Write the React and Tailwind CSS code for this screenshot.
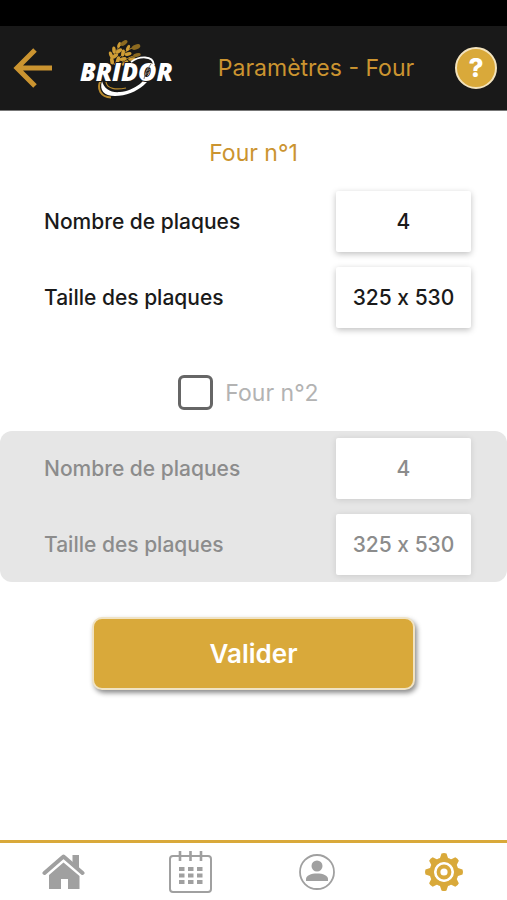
import { useState } from "react";

const Logo = () => (
  <svg viewBox="0 0 100 64" className="h-16 w-[100px] shrink-0" role="img" aria-label="Bridor">
    {/* wheat ears */}
    <g fill="none" stroke="#b98a2c" strokeWidth="1">
      <path d="M34 28C36 20 39 13 46 7" />
      <path d="M37 29C42 21 48 14 60 10" />
      <path d="M42 29C47 24 53 20 62 19" />
    </g>
    <g fill="#cf9d35">
      <ellipse cx="35" cy="25" rx="3.600" ry="1.900" transform="rotate(-100 35 25)" />
      <ellipse cx="34" cy="19" rx="3.600" ry="1.800" transform="rotate(-110 34 19)" />
      <ellipse cx="38" cy="20" rx="3.600" ry="1.800" transform="rotate(-35 38 20)" />
      <ellipse cx="37" cy="14" rx="3.600" ry="1.800" transform="rotate(-95 37 14)" />
      <ellipse cx="42" cy="15" rx="3.600" ry="1.800" transform="rotate(-35 42 15)" />
      <ellipse cx="42" cy="9" rx="3.200" ry="1.500" transform="rotate(-70 42 9)" />
      <ellipse cx="41" cy="24" rx="3.800" ry="1.900" transform="rotate(-75 41 24)" />
      <ellipse cx="46" cy="23" rx="3.600" ry="1.800" transform="rotate(-10 46 23)" />
      <ellipse cx="46" cy="17" rx="3.600" ry="1.800" transform="rotate(-80 46 17)" />
      <ellipse cx="51" cy="18" rx="3.600" ry="1.700" transform="rotate(-12 51 18)" />
      <ellipse cx="51" cy="12" rx="3.400" ry="1.600" transform="rotate(-65 51 12)" />
      <ellipse cx="48" cy="27" rx="3.800" ry="1.600" transform="rotate(-35 48 27)" />
      <ellipse cx="55" cy="23" rx="3.800" ry="1.600" transform="rotate(-10 55 23)" />
    </g>
    <g fill="#8d6a20">
      <ellipse cx="47" cy="7" rx="4" ry="2" transform="rotate(-35 47 7)" />
      <ellipse cx="59" cy="11" rx="4.500" ry="2.400" transform="rotate(-20 59 11)" />
      <ellipse cx="60" cy="19" rx="3.800" ry="1.800" transform="rotate(-12 60 19)" />
    </g>
    {/* loop around the name */}
    <path d="M76 28C80 42 60 60 38 60C27 60 22 54 25 45C27 53 34 57 43 56C57 55 72 44 74 30Z" fill="#fff" />
    <path d="M24 44C19 53 24 61 34 61.500" fill="none" stroke="#b98a2c" strokeWidth="2" />
    <path d="M29 46C30 53 39 54 49 52" fill="none" stroke="#b98a2c" strokeWidth="1.200" />
    <text
      x="3"
      y="45"
      fontFamily="'Open Sans', sans-serif"
      fontSize="25"
      fontWeight="800"
      fontStyle="italic"
      fill="#fff"
      stroke="#191919"
      strokeWidth="2"
      paintOrder="stroke"
    >
      BRIDOR
    </text>
    <path d="M54 26C62 20 76 19 77 29" fill="none" stroke="#fff" strokeWidth="1.800" />
    <path d="M67 43C68 37 70 33 74 28M68 39L72 36M69 35L74 33" fill="none" stroke="#777" strokeWidth="1" />
  </svg>
);

const BackIcon = () => (
  <svg viewBox="0 0 40 40" className="size-10" fill="none" stroke="#cb9430" strokeWidth="5">
    <path d="M39 20H5M22 2L4 20L22 38" />
  </svg>
);

const HomeIcon = () => (
  <svg viewBox="0 0 44 44" className="size-11" fill="#a0a0a0">
    <path d="M31.500 5H38V19L31.500 13Z" />
    <path d="M3.500 23L22.500 6.500L41.500 23" fill="none" stroke="#a0a0a0" strokeWidth="4" strokeLinecap="round" strokeLinejoin="round" />
    <path d="M22.500 12.500L38.500 26V39H27V29H20V39H8V25Z" />
  </svg>
);

const CalendarIcon = () => (
  <svg viewBox="0 0 44 44" className="size-11" fill="none" stroke="#a0a0a0" strokeWidth="2">
    <rect x="2" y="6" width="41" height="36" rx="3" />
    <path d="M12 1V11M22.500 1V11M33 1V11" strokeWidth="2.600" />
    <path d="M11 19H16.500M20 19H25.500M29 19H34.500M11 25.500H16.500M20 25.500H25.500M29 25.500H34.500M11 32H16.500M20 32H25.500M29 32H34.500" strokeWidth="4" />
  </svg>
);

const ProfileIcon = () => (
  <svg viewBox="0 0 36 36" className="size-9" fill="#a0a0a0">
    <circle cx="18" cy="18" r="17" fill="none" stroke="#a0a0a0" strokeWidth="1.800" />
    <circle cx="18" cy="12" r="5.500" />
    <path d="M7 27V25C7 21.500 12 19.500 18 19.500S29 21.500 29 25V27Z" />
  </svg>
);

const teeth = [0, 45, 90, 135, 180, 225, 270, 315];

const SettingsIcon = () => (
  <svg viewBox="0 0 40 40" className="size-10" fill="#d9a93a">
    {teeth.map((angle) => (
      <path key={angle} d="M15 9L17.500 1.500Q20 .500 22.500 1.500L25 9Z" transform={`rotate(${angle} 20 20)`} />
    ))}
    <circle cx="20" cy="20" r="12" fill="none" stroke="#d9a93a" strokeWidth="5" />
    <circle cx="20" cy="20" r="10" fill="#fff" />
    <circle cx="20" cy="20" r="5.500" fill="none" stroke="#d9a93a" strokeWidth="3.800" />
  </svg>
);

const Field = ({ id, label, options, disabled }) => (
  <div className="flex items-center justify-between">
    <label htmlFor={id} className={disabled ? "text-[#8c8c8c]" : "text-[#1a1a1a]"}>
      {label}
    </label>
    <select
      id={id}
      disabled={disabled}
      className="h-[61px] w-[135px] appearance-none rounded-xs bg-white text-center text-[#1a1a1a] shadow-[0_2px_6px_rgba(0,0,0,0.25)] [font-variant-ligatures:no-contextual] [text-align-last:center] disabled:text-[#8c8c8c] disabled:opacity-100 disabled:shadow-[0_1px_6px_rgba(0,0,0,0.12)]"
    >
      {options.map((option) => (
        <option key={option}>{option}</option>
      ))}
    </select>
  </div>
);

const OvenFields = ({ oven, disabled }) => (
  <div className="flex flex-col gap-[15px] pr-9 pl-11 text-[21px] font-medium">
    <Field id={`count-${oven}`} label="Nombre de plaques" options={["4"]} disabled={disabled} />
    <Field id={`size-${oven}`} label="Taille des plaques" options={["325 x 530"]} disabled={disabled} />
  </div>
);

const tabs = [
  { name: "Accueil", Icon: HomeIcon },
  { name: "Calendrier", Icon: CalendarIcon },
  { name: "Profil", Icon: ProfileIcon },
  { name: "Paramètres", Icon: SettingsIcon },
];

const App = () => {
  const [secondOven, setSecondOven] = useState(false);

  return (
    <div className="flex min-h-screen flex-col bg-white font-['Inter',sans-serif] text-[23px] leading-7">
      <div className="h-[26px] bg-black" />
      <header className="flex h-[85px] items-center border-b border-[#777] bg-[#191919] pr-[10px] pl-[13px]">
        <button type="button" aria-label="Retour">
          <BackIcon />
        </button>
        <div className="ml-6">
          <Logo />
        </div>
        <h1 className="flex-1 text-center text-[#cb9430]">Paramètres - Four</h1>
        <button
          type="button"
          aria-label="Aide"
          className="size-[42px] rounded-full border-2 border-[#f3e3bd] bg-[#d9a93a] text-[26px] font-extrabold text-white"
        >
          ?
        </button>
      </header>

      <main className="flex flex-1 flex-col pt-7">
        <h2 className="mb-6 text-center text-[#cb9430]">Four n°1</h2>
        <OvenFields oven={1} />

        <label className="mt-[47px] flex items-center justify-center gap-3 pr-2.5 text-[#b3b3b3]">
          <input
            type="checkbox"
            checked={secondOven}
            onChange={(e) => setSecondOven(e.target.checked)}
            className="size-[35px] appearance-none rounded-md border-3 border-[#666] bg-white checked:bg-[#d9a93a]"
          />
          Four n°2
        </label>
        <div className={`mt-[21px] rounded-xl py-[7px] ${secondOven ? "bg-white" : "bg-[#e6e6e6]"}`}>
          <OvenFields oven={2} disabled={!secondOven} />
        </div>

        <div className="mt-[35px] px-[92px]">
          <button
            type="button"
            className="h-[73px] w-full rounded-[10px] border-2 border-[#f0e3c4] bg-[#d9a93a] text-[26px] font-semibold text-white shadow-[2px_3px_5px_rgba(0,0,0,0.45)]"
          >
            Valider
          </button>
        </div>
      </main>

      <nav className="grid h-[60px] grid-cols-4 border-t-3 border-[#d9a93a]">
        {tabs.map(({ name, Icon }) => (
          <a key={name} href="#" aria-label={name} className="flex items-center justify-center">
            <Icon />
          </a>
        ))}
      </nav>
    </div>
  );
};

export default App;
